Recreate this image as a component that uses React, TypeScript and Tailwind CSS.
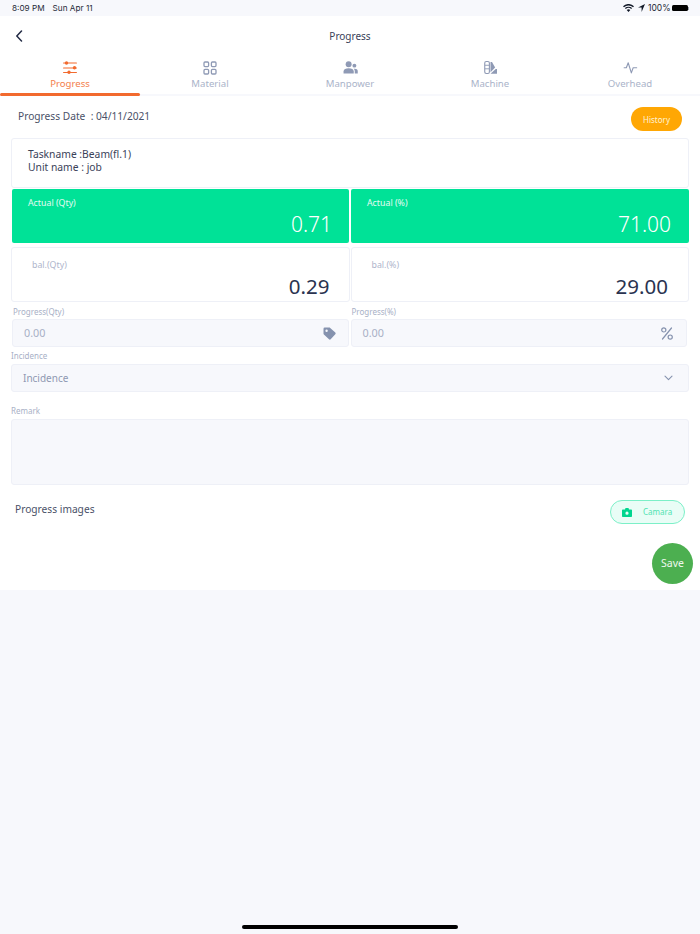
import React from "react";

const font = { fontFamily: '"Noto Sans", "Open Sans", sans-serif' };

function SlidersIcon() {
  return (
    <svg width="14" height="13" viewBox="0 0 14 13" fill="none">
      <g stroke="#f26a2e" strokeWidth="1.2" strokeLinecap="round">
        <path d="M0.600 2h12.800M0.600 7h12.800M0.600 11.500h12.800" />
      </g>
      <circle cx="3.500" cy="2" r="1.700" fill="#f26a2e" />
      <circle cx="11.500" cy="6.700" r="1.700" fill="#f26a2e" />
      <circle cx="6" cy="11.200" r="1.700" fill="#f26a2e" />
    </svg>
  );
}
function GridIcon() {
  return (
    <svg width="14" height="14" viewBox="0 0 14 14" fill="none" stroke="#8f9ab5" strokeWidth="1.300">
      <rect x="1" y="1" width="4.600" height="4.600" rx="1" />
      <rect x="8.400" y="1" width="4.600" height="4.600" rx="1" />
      <rect x="1" y="8.400" width="4.600" height="4.600" rx="1" />
      <rect x="8.400" y="8.400" width="4.600" height="4.600" rx="1" />
    </svg>
  );
}
function PeopleIcon() {
  return (
    <svg width="15" height="13" viewBox="0 0 16 14" fill="#8f9ab5">
      <circle cx="6" cy="3.600" r="3.200" />
      <path d="M0.500 13.500v-2.200C0.500 9.200 3 7.900 6 7.900s5.500 1.300 5.500 3.400v2.200z" />
      <circle cx="12.200" cy="5" r="2.100" />
      <path d="M12.600 13.500v-2.400c0-1.100-.4-2-1.200-2.700.4-.1.8-.1 1.200-.1 1.800 0 3.200.9 3.200 2.400v2.800z" />
    </svg>
  );
}
function SwatchIcon() {
  return (
    <svg width="13" height="13" viewBox="0 0 14 14" fill="none">
      <rect x="0.800" y="0.600" width="5" height="12.800" rx="1.600" stroke="#8f9ab5" strokeWidth="1.200" />
      <path d="M1 4.600h4.600M1 8.400h4.600" stroke="#8f9ab5" strokeWidth="1" />
      <path d="M7 1.200h1.600L12 7 7 12z" fill="#8f9ab5" />
      <path d="M7 13.600h7V8.600h-1.400z" fill="#8f9ab5" />
    </svg>
  );
}
function PulseIcon() {
  return (
    <svg width="15" height="12" viewBox="0 0 15 13" fill="none" stroke="#8f9ab5" strokeWidth="1.200" strokeLinecap="round" strokeLinejoin="round">
      <path d="M0.600 6.200H3L5 0.800 8.400 11.800 10.400 6.200h3.800" />
    </svg>
  );
}

const tabs = [
  { label: "Progress", icon: <SlidersIcon />, active: true },
  { label: "Material", icon: <GridIcon /> },
  { label: "Manpower", icon: <PeopleIcon /> },
  { label: "Machine", icon: <SwatchIcon /> },
  { label: "Overhead", icon: <PulseIcon /> },
];

function StatusIcons() {
  return (
    <div className="flex items-center">
      <svg width="11" height="8" viewBox="0 0 11 8" fill="#111827">
        <path d="M5.500 8 3.700 6a2.600 2.600 0 0 1 3.600 0zM2.800 5.100 1.900 4.100a5.200 5.200 0 0 1 7.200 0l-.9 1a3.900 3.900 0 0 0-5.400 0zM1 3.200 0 2.200a7.900 7.900 0 0 1 11 0l-1 1a6.500 6.500 0 0 0-9 0z" />
      </svg>
      <svg className="ml-[4px]" width="7" height="8" viewBox="0 0 7 8" fill="#111827">
        <path d="M7 0 3.600 8V3.600H0z" />
      </svg>
      <span className="ml-[3px] text-[8.5px] leading-none text-[#1f2937]">100%</span>
      <div className="ml-[1px] flex items-center">
        <div className="h-[6px] w-[16px] rounded-[1.500px] bg-black" />
        <div className="ml-[0.500px] h-[3px] w-[1px] bg-[#9ca3af]" />
      </div>
    </div>
  );
}

function StatCard({ label, value, green, valuePad }: { label: string; value: string; green?: boolean; valuePad: string }) {
  return (
    <div
      className={
        green
          ? "flex h-[54px] flex-col rounded-[2px] bg-[#00e297] text-white"
          : "flex h-[55px] flex-1 flex-col rounded-[3px] border border-[#eef0f7] bg-white text-[#2a3350]"
      }
    >
      <div className={`${green ? "pl-[16px] pt-[8px] text-[#e6fbf3]" : "pl-[20px] pt-[11px] text-[#aeb5cb]"} text-[8.8px] leading-[13px]`}>{label}</div>
      <div className={`${valuePad} ${green ? "text-[21px] font-light" : "text-[20.5px]"} text-right leading-[28px]`}>{value}</div>
    </div>
  );
}

function Label({ children, className = "" }: { children: React.ReactNode; className?: string }) {
  return <div className={`text-[8px] leading-[12px] text-[#a8b0c6] ${className}`}>{children}</div>;
}

export default function App() {
  return (
    <div className="flex h-[934px] w-[700px] flex-col overflow-hidden bg-[#f7f8fc]" style={font}>
      <div className="flex h-4 items-center justify-between pl-[12px] pr-[11px] text-[8.2px] leading-none text-[#1f2937]" style={{ fontFamily: '"Inter", sans-serif' }}>
        <div className="flex gap-[8px]">
          <span>8:09 PM</span>
          <span>Sun Apr 11</span>
        </div>
        <StatusIcons />
      </div>

      <div className="relative flex h-[574px] flex-col bg-white">
        <div className="relative flex h-[39px] items-center justify-center text-[10px] text-[#3a4259]">
          <svg className="absolute left-[15px] top-[14px]" width="8" height="12" viewBox="0 0 8 12" fill="none" stroke="#232b45" strokeWidth="1.500" strokeLinecap="round" strokeLinejoin="round">
            <path d="M6.500 1 1.800 6l4.700 5" />
          </svg>
          <span className="pt-[1px]">Progress</span>
        </div>

        <div className="flex h-[41px] border-b-2 border-[#f7f8fc]">
          {tabs.map((t) => (
            <div key={t.label} className="relative flex w-[140px] flex-col items-center">
              <div className="mt-[5px] flex h-[15px] items-center justify-center">{t.icon}</div>
              <div className={`mt-[1px] text-[9.6px] leading-[15px] ${t.active ? "text-[#f47e4b]" : "text-[#aab3c9]"}`}>{t.label}</div>
              {t.active && <div className="absolute bottom-[-2px] left-0 h-[3px] w-full rounded-full bg-[#f26a2e]" />}
            </div>
          ))}
        </div>

        <div className="flex h-[42px] items-start justify-between pl-[18px] pr-[18px]">
          <div className="pt-[12px] text-[10.2px] leading-[16px] text-[#4a5168]">Progress Date&nbsp; : 04/11/2021</div>
          <div className="mt-[11px] flex h-[24px] w-[51px] items-center justify-center rounded-full bg-[#ffa704] pt-[1px] text-[8px] text-[#fff3d6]">History</div>
        </div>

        <div className="ml-[11px] mr-[11px] h-[50px] rounded-[3px] border border-[#eef0f7] pl-[16px] pt-[9px] text-[10.3px] leading-[13px] text-[#3a4259]">
          <div>Taskname :Beam(fl.1)</div>
          <div>Unit name : job</div>
        </div>

        <div className="ml-[12px] mr-[11px] mt-[1px] grid grid-cols-[337px_338px] gap-[2px]">
          <StatCard green label="Actual (Qty)" value="0.71" valuePad="pr-[17px]" />
          <StatCard green label="Actual (%)" value="71.00" valuePad="pr-[18px]" />
        </div>

        <div className="ml-[11px] mr-[11px] mt-[4px] flex gap-[1px]">
          <StatCard label="bal.(Qty)" value="0.29" valuePad="pr-[19px]" />
          <StatCard label="bal.(%)" value="29.00" valuePad="pr-[20px]" />
        </div>

        <div className="ml-[12px] mr-[13px] mt-[3px] flex gap-[2px]">
          <div className="flex-1">
            <Label className="h-[14px] pl-[1px] pt-[1px]">Progress(Qty)</Label>
            <div className="flex h-[28px] items-center justify-between rounded-[3px] border border-[#eef0f7] bg-[#f7f8fc] pl-[11px] pr-[12px] text-[10.8px] text-[#a8b0c6]">
              <span className="pt-[1px]">0.00</span>
              <svg width="13" height="13" viewBox="0 0 13 13" fill="#8592ae">
                <path fillRule="evenodd" d="M0.500 1.800A1.300 1.300 0 0 1 1.800.5h4.400c.4 0 .7.1 1 .4l5.100 4.700c.5.5.5 1.200 0 1.700l-4.600 5c-.5.5-1.200.5-1.700 0L.9 7.400C.6 7.100.5 6.800.5 6.400zM3.600 4.900a1.200 1.200 0 1 0 0-2.400 1.200 1.200 0 0 0 0 2.400z" />
              </svg>
            </div>
          </div>
          <div className="flex-1">
            <Label className="h-[14px] pl-[1px] pt-[1px]">Progress(%)</Label>
            <div className="flex h-[28px] items-center justify-between rounded-[3px] border border-[#eef0f7] bg-[#f7f8fc] pl-[11px] pr-[13px] text-[10.8px] text-[#a8b0c6]">
              <span className="pt-[1px]">0.00</span>
              <svg width="12" height="13" viewBox="0 0 12 13" fill="none" stroke="#8592ae" strokeWidth="1.200">
                <circle cx="2.800" cy="2.900" r="2.100" />
                <circle cx="9.200" cy="10.100" r="2.100" />
                <path d="M10.500 1 1.500 12" strokeLinecap="round" />
              </svg>
            </div>
          </div>
        </div>

        <div className="mx-[11px] mt-[3px]">
          <Label className="h-[14px]">Incidence</Label>
          <div className="flex h-[28px] items-center justify-between rounded-[3px] border border-[#eef0f7] bg-[#f7f8fc] pl-[11px] pr-[15px] text-[10px] text-[#8f98b2]">
            <span>Incidence</span>
            <svg width="9" height="6" viewBox="0 0 9 6" fill="none" stroke="#8592ae" strokeWidth="1.100" strokeLinecap="round" strokeLinejoin="round">
              <path d="M1 1.200 4.500 4.600 8 1.200" />
            </svg>
          </div>
        </div>

        <div className="mx-[11px] mt-[13px]">
          <Label className="h-[14px]">Remark</Label>
          <div className="h-[66px] rounded-[3px] border border-[#eef0f7] bg-[#f7f8fc]" />
        </div>

        <div className="ml-[15px] mr-[15px] mt-[15px] flex items-start justify-between">
          <div className="pt-[1px] text-[10.2px] leading-[16px] text-[#4a5168]">Progress images</div>
          <div className="flex h-[24px] w-[75px] items-center rounded-full border border-[#7cf0c8] bg-[#e9fdf6] pl-[11px]">
            <svg width="10" height="9" viewBox="0 0 10 9" fill="#00d68f">
              <path fillRule="evenodd" d="M3 1.400 3.500 0h3L7 1.400h2c.6 0 1 .4 1 1V8c0 .6-.4 1-1 1H1C.4 9 0 8.600 0 8V2.400c0-.6.4-1 1-1zM5 6.800a1.600 1.600 0 1 0 0-3.200 1.600 1.600 0 0 0 0 3.200z" />
            </svg>
            <span className="ml-[11px] text-[8px] text-[#4fe3b2]">Camara</span>
          </div>
        </div>

        <div className="absolute left-[652px] top-[527px] flex h-[41px] w-[41px] items-center justify-center rounded-full bg-[#4caf50] text-[10.5px] text-[#eef8ee]">Save</div>
      </div>

      <div className="mt-auto flex justify-center pb-[5px]">
        <div className="h-[4px] w-[216px] rounded-full bg-black" />
      </div>
    </div>
  );
}
